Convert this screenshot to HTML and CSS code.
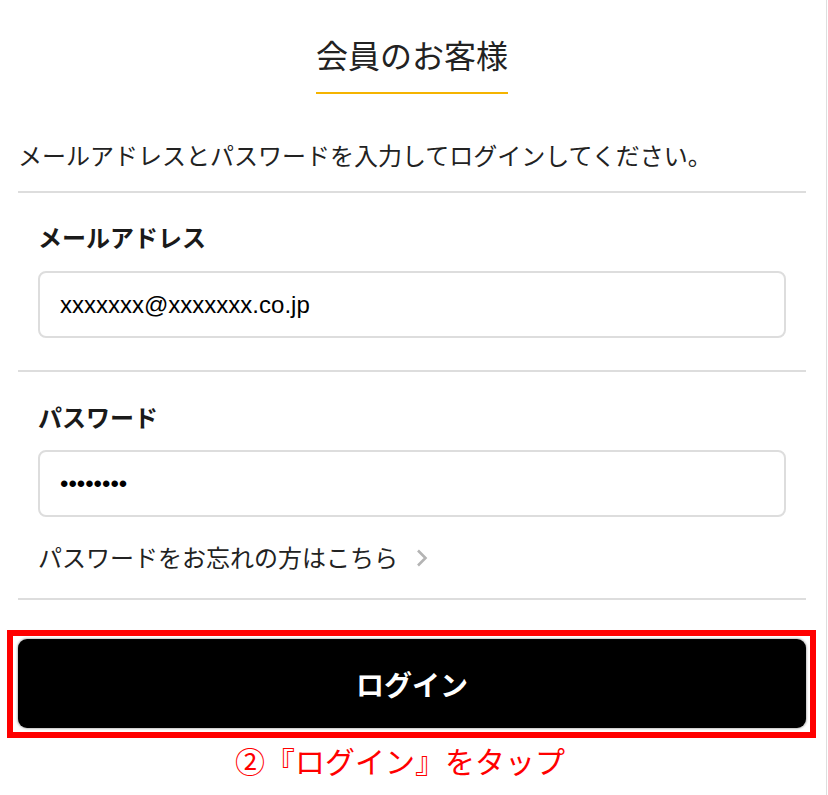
FILE: index.html
```html
<!DOCTYPE html>
<html lang="ja">
<head>
<meta charset="utf-8">
<title>会員のお客様</title>
<link rel="stylesheet" href="styles.css">
</head>
<body>
<div class="page">
  <main class="content">
    <header class="header">
      <h1 class="title">会員のお客様</h1>
    </header>
    <p class="intro">メールアドレスとパスワードを入力してログインしてください。</p>
    <form class="form">
      <section class="field field-email">
        <label class="label" for="email">メールアドレス</label>
        <input class="input input-email" id="email" type="text" value="xxxxxxx@xxxxxxx.co.jp">
      </section>
      <section class="field field-password">
        <label class="label" for="pw">パスワード</label>
        <input class="input input-password" id="pw" type="password" value="abcdefgh">
        <a class="forgot" href="#">パスワードをお忘れの方はこちら<svg class="chev" width="12" height="18" viewBox="0 0 12 18"><polyline points="2,1.5 9.5,9 2,16.5" fill="none" stroke="#b4b4b4" stroke-width="2.6"/></svg></a>
      </section>
      <div class="actions">
        <div class="highlight">
          <button class="login" type="button">ログイン</button>
        </div>
      </div>
    </form>
  </main>
  <p class="annot">②『ログイン』をタップ</p>
</div>
</body>
</html>
```
FILE: styles.css
```css
html, body {
  margin: 0;
  padding: 0;
  background: #fff;
}
body {
  font-family: "Noto Sans CJK JP", "Noto Sans", sans-serif;
  color: #222;
}
.page {
  width: 826px;
  min-height: 795px;
  border-right: 1px solid #dedede;
}
.content {
  margin-left: 18px;
  width: 788px;
}
.header {
  padding-top: 38px;
  text-align: center;
}
.title {
  display: inline-block;
  margin: 0;
  font-size: 32px;
  line-height: 32px;
  font-weight: 400;
  padding-bottom: 22px;
  border-bottom: 2px solid #f5b400;
}
.intro {
  margin: 49px 0 0;
  font-size: 24px;
  line-height: 24px;
  padding-bottom: 24px;
}
.form {
  margin: 0;
}
.field {
  border-top: 2px solid #dddddd;
  padding: 32px 20px 32px;
  display: flex;
  flex-direction: column;
}
.field-password {
  padding-top: 33px;
  padding-bottom: 29px;
}
.label {
  font-size: 24px;
  line-height: 24px;
  font-weight: 700;
  color: #1a1a1a;
}
.input {
  margin-top: 22px;
  height: 67px;
  box-sizing: border-box;
  border: 2px solid #dddddd;
  border-radius: 8px;
  padding: 0 20px;
  font-family: "Liberation Sans", Arial, sans-serif;
  font-size: 24px;
  color: #000;
  background: #fff;
  outline: none;
}
.input-password {
  margin-top: 21px;
}
.forgot {
  margin-top: 28px;
  font-size: 24px;
  line-height: 24px;
  color: #222;
  text-decoration: none;
  display: flex;
  align-items: center;
}
.chev {
  margin-left: 18px;
  margin-top: 1px;
}
.actions {
  border-top: 2px solid #dddddd;
  padding-top: 30px;
}
.highlight {
  margin: 0 -10px 0 -11px;
  border: 6px solid #ff0000;
  padding: 3px 4px 4px 5px;
}
.login {
  display: block;
  width: 788px;
  height: 89px;
  border: none;
  border-radius: 9px;
  background: #000;
  color: #fff;
  font-family: "Noto Sans CJK JP", sans-serif;
  font-size: 28px;
  font-weight: 700;
  box-shadow: 0 0 2px 1px rgba(0, 0, 0, 0.25);
  cursor: pointer;
}
.annot {
  margin: 7px 0 0;
  width: 800px;
  text-align: center;
  font-size: 30px;
  line-height: 30px;
  color: #ff0000;
}
```
